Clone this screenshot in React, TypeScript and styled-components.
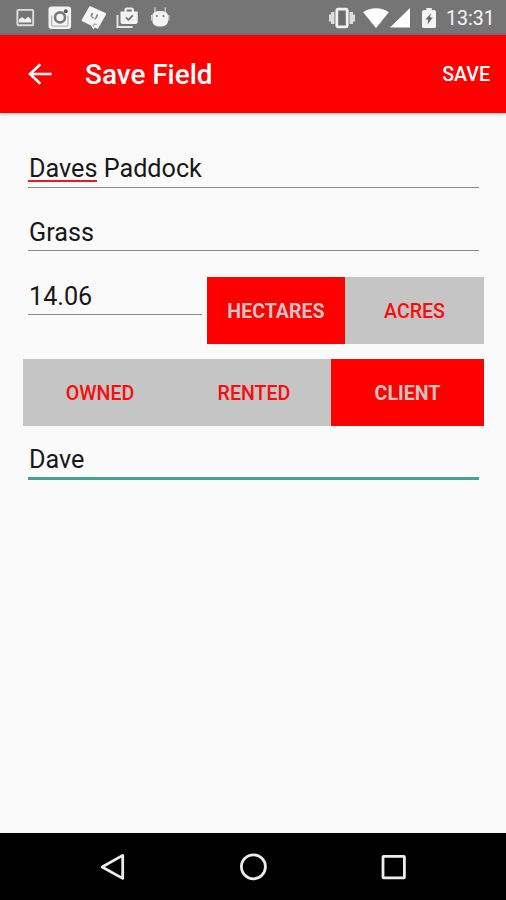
import React, { useState } from 'react';
import styled, { createGlobalStyle } from 'styled-components';

const GlobalStyle = createGlobalStyle`
  * { box-sizing: border-box; }
  body { margin: 0; background: #fafafa; font-family: Roboto, sans-serif; }
  svg { display: block; flex: none; }
`;

const Screen = styled.div`
  display: flex;
  flex-direction: column;
  width: 506px;
  height: 900px;
  overflow: hidden;
  background: #fafafa;
`;

const StatusBar = styled.header`
  display: flex;
  justify-content: space-between;
  align-items: center;
  flex: none;
  height: 35px;
  padding: 0 11px 0 15px;
  background: #757575;
`;

const StatusGroup = styled.div`
  display: flex;
  align-items: center;
`;

const StatusItem = styled.span<{ $before?: number }>`
  margin-left: ${(p) => p.$before ?? 0}px;
`;

const Clock = styled.time`
  width: 49px;
  margin-left: 10px;
  padding-top: 2px;
  font-size: 19.6px;
  line-height: 33px;
  white-space: nowrap;
  color: #f8f8f8;
`;

const Toolbar = styled.nav`
  display: flex;
  align-items: center;
  flex: none;
  height: 78px;
  padding: 0 16px 0 28px;
  background: #ff0000;
  color: #fff;
  box-shadow: 0 1px 4px rgba(0, 40, 40, 0.28);
`;

const Title = styled.h1`
  flex: 1;
  margin: 0 0 0 33px;
  padding-top: 2px;
  font-size: 27.9px;
  font-weight: 500;
  line-height: 76px;
  white-space: nowrap;
`;

const BareButton = styled.button`
  padding: 0;
  border: 0;
  background: none;
  color: inherit;
  font: inherit;
`;

const SaveButton = styled(BareButton)`
  padding-top: 1px;
  font-size: 19.6px;
  font-weight: 500;
`;

const Form = styled.main`
  display: flex;
  flex-direction: column;
  flex: 1;
  padding: 37px 22px 0 23px;
`;

const Field = styled.div<{ $focused?: boolean; $drop: number }>`
  height: ${(p) => (p.$focused ? 41 : 38)}px;
  margin: 0 5px;
  padding: ${(p) => p.$drop}px 0 0 1px;
  border-bottom: ${(p) => (p.$focused ? '3px solid #47a094' : '1px solid #8a8a8a')};
  color: #181818;
  font-size: 25.2px;
  line-height: 36px;
  white-space: nowrap;
`;

const FieldSlot = styled.div<{ $before: number }>`
  margin-top: ${(p) => p.$before}px;
`;

const Misspelled = styled.span`
  display: inline-block;
  height: 31px;
  margin-left: -1px;
  padding-left: 1px;
  border-bottom: 2px solid #f01818;
  vertical-align: top;
`;

const AreaRow = styled.div`
  display: grid;
  grid-template-columns: 184px 277px;
  margin-top: 26px;
`;

const Segments = styled.div<{ $columns: string }>`
  display: grid;
  grid-template-columns: ${(p) => p.$columns};
  height: 67px;
  background: #c5c5c5;
`;

const Segment = styled.button<{ $active: boolean }>`
  padding: 2px 0 0;
  border: 0;
  background: ${(p) => (p.$active ? '#ff0000' : 'transparent')};
  color: ${(p) => (p.$active ? '#cdc3c3' : '#fb0c0c')};
  font-family: inherit;
  font-size: 19.6px;
  font-weight: ${(p) => (p.$active ? 700 : 500)};
`;

const OwnerSlot = styled.div`
  margin: 15px 0 13px;
`;

const NavBar = styled.footer`
  display: flex;
  justify-content: center;
  align-items: center;
  gap: 112px;
  flex: none;
  height: 67px;
  background: #000;
`;

const ImageIcon = () => (
  <svg width="20" height="20" viewBox="0 0 20 20">
    <rect x="2.4" y="1.9" width="15.8" height="15.4" rx="1" fill="none" stroke="#dedede" strokeWidth="1.9" />
    <path d="M4 14.5v-3l3-2.4 3 2.2 3.200-2.600 3 2.800v3z" fill="#f0f0f0" />
  </svg>
);

const CameraIcon = () => (
  <svg width="24" height="24" viewBox="0 0 24 24">
    <rect x="0.5" y="0.5" width="22.6" height="22.6" rx="3" fill="#f4f4f4" />
    <path d="M3.600 9.400v9.200a1.500 1.500 0 0 0 1.500 1.500h13.400a1.500 1.500 0 0 0 1.500-1.500V9.400" fill="none" stroke="#b4b4b4" strokeWidth="1.2" />
    <circle cx="12" cy="11.4" r="5" fill="#f4f4f4" stroke="#777" strokeWidth="2.6" />
    <circle cx="17.8" cy="5.2" r="2" fill="#585858" />
  </svg>
);

const CardIcon = () => (
  <svg width="26" height="26" viewBox="0 0 26 26">
    <path d="M9.500 1.300 24.600 8a1 1 0 0 1 .4 1.400L16.800 24 14 22.600l-1.700 1.600-2.200-3.600L1.200 16.200a1 1 0 0 1-.4-1.400L8.200 1.800a1 1 0 0 1 1.300-.5z" fill="#f6f6f6" />
    <path d="m11.500 8-1.500 3.600M10.800 12.200l1.800.5M16.500 9.500 15 13.200M13.600 13.500l1.200.4" fill="none" stroke="#808080" strokeWidth="1.7" />
    <path d="m11.800 21.400 1.600-2.400 2.400.6" fill="none" stroke="#a0a0a0" strokeWidth="1.2" />
  </svg>
);

const ShopIcon = () => (
  <svg width="23" height="22" viewBox="0 0 23 22">
    <path d="M1.500 8v12h15" fill="none" stroke="#e7e7e7" strokeWidth="1.900" />
    <path d="M9.500 5V3.200C9.500 2 10.200 1.500 11.200 1.500h4c1 0 1.700.5 1.700 1.700V5" fill="none" stroke="#f0f0f0" strokeWidth="2.200" />
    <path d="M4.500 4.600h17.200V15a2 2 0 0 1-2 2H6.500a2 2 0 0 1-2-2z" fill="#f4f4f4" />
    <path d="m10 10.500 2.400 2.400 4.400-4.600" fill="none" stroke="#6e6e6e" strokeWidth="1.700" />
  </svg>
);

const RobotIcon = () => (
  <svg width="19" height="23" viewBox="0 0 19 23">
    <path d="M4 1.200v6M14.300 1.200v6" stroke="#c4c4c4" strokeWidth="1.500" />
    <path d="M1.400 10c0-3.400 3-5 7.800-5s7.800 1.600 7.800 5v4.500c0 4-3 6-7.800 6s-7.800-2-7.800-6z" fill="#f4f4f4" />
    <path d="M.6 9v5.500M17.800 9v5.500" stroke="#d8d8d8" strokeWidth="1.200" />
    <circle cx="5.800" cy="10" r="1.100" fill="#777" />
    <circle cx="12.600" cy="10" r="1.100" fill="#777" />
  </svg>
);

const VibrateIcon = () => (
  <svg width="26" height="22" viewBox="0 0 26 22">
    <path d="M0 7.500h2V5h3.500v12H2v-2.500H0zM26 7.500h-2V5h-3.500v12H24v-2.500h2z" fill="#dcdcdc" />
    <rect x="7.800" y="2.200" width="10.400" height="17.600" rx="1.500" fill="#6c6c6c" stroke="#f2f2f2" strokeWidth="2.800" />
  </svg>
);

const WifiIcon = () => (
  <svg width="26" height="22" viewBox="0 0 26 22">
    <path d="M.2 5.300C7.200-.2 18.800-.2 25.800 5.300L13 21z" fill="#fff" />
  </svg>
);

const SignalIcon = () => (
  <svg width="20" height="22" viewBox="0 0 20 22">
    <path d="M0 20.500 20 1v19.500z" fill="#fff" />
  </svg>
);

const BatteryIcon = () => (
  <svg width="14" height="22" viewBox="0 0 14 22">
    <path d="M4.300 1h5.400v2H12a2 2 0 0 1 2 2v14.500a1.500 1.500 0 0 1-1.500 1.500h-11A1.500 1.500 0 0 1 0 19.500V5a2 2 0 0 1 2-2h2.300z" fill="#f4f4f4" />
    <path d="M9.200 6.200 3.400 12.400H6.300L5.500 17.500l5.200-7H7.800z" fill="#666" />
  </svg>
);

const BackArrow = () => (
  <svg width="24" height="24" viewBox="0 0 24 24" fill="none" stroke="#fff" strokeWidth="2.600">
    <path d="M23.500 12H2.500M12.300 2.200 2 12l10.300 9.800" />
  </svg>
);

const NavBack = () => (
  <svg width="28" height="28" viewBox="0 0 28 28">
    <path d="M23.700 2.400v23L3.100 14z" fill="none" stroke="#ededed" strokeWidth="2.800" strokeLinejoin="round" />
  </svg>
);

const NavHome = () => (
  <svg width="28" height="28" viewBox="0 0 28 28">
    <circle cx="14.400" cy="13.800" r="12" fill="none" stroke="#ededed" strokeWidth="2.800" />
  </svg>
);

const NavRecent = () => (
  <svg width="28" height="28" viewBox="0 0 28 28">
    <rect x="4" y="3.400" width="21.400" height="21.400" rx="0.600" fill="none" stroke="#ededed" strokeWidth="2.800" />
  </svg>
);

interface PickerProps {
  options: string[];
  initial: string;
  columns: string;
}

function Picker({ options, initial, columns }: PickerProps) {
  const [selected, setSelected] = useState(initial);
  return (
    <Segments $columns={columns}>
      {options.map((option) => (
        <Segment key={option} $active={option === selected} onClick={() => setSelected(option)}>
          {option}
        </Segment>
      ))}
    </Segments>
  );
}

export default function App() {
  return (
    <>
      <GlobalStyle />
      <Screen>
        <StatusBar>
          <StatusGroup>
            <StatusItem><ImageIcon /></StatusItem>
            <StatusItem $before={12.5}><CameraIcon /></StatusItem>
            <StatusItem $before={9}><CardIcon /></StatusItem>
            <StatusItem $before={9.5}><ShopIcon /></StatusItem>
            <StatusItem $before={12}><RobotIcon /></StatusItem>
          </StatusGroup>
          <StatusGroup>
            <StatusItem><VibrateIcon /></StatusItem>
            <StatusItem $before={8}><WifiIcon /></StatusItem>
            <StatusItem $before={1}><SignalIcon /></StatusItem>
            <StatusItem $before={12}><BatteryIcon /></StatusItem>
            <Clock>13:31</Clock>
          </StatusGroup>
        </StatusBar>
        <Toolbar>
          <BareButton aria-label="Back">
            <BackArrow />
          </BareButton>
          <Title>Save Field</Title>
          <SaveButton>SAVE</SaveButton>
        </Toolbar>
        <Form>
          <Field $drop={1}>
            <Misspelled>Daves</Misspelled> Paddock
          </Field>
          <FieldSlot $before={25}>
            <Field $drop={2}>Grass</Field>
          </FieldSlot>
          <AreaRow>
            <Field $drop={2}>14.06</Field>
            <Picker options={['HECTARES', 'ACRES']} initial="HECTARES" columns="138px 139px" />
          </AreaRow>
          <OwnerSlot>
            <Picker options={['OWNED', 'RENTED', 'CLIENT']} initial="CLIENT" columns="154px 154px 153px" />
          </OwnerSlot>
          <Field $focused $drop={3}>Dave</Field>
        </Form>
        <NavBar>
          <NavBack />
          <NavHome />
          <NavRecent />
        </NavBar>
      </Screen>
    </>
  );
}
